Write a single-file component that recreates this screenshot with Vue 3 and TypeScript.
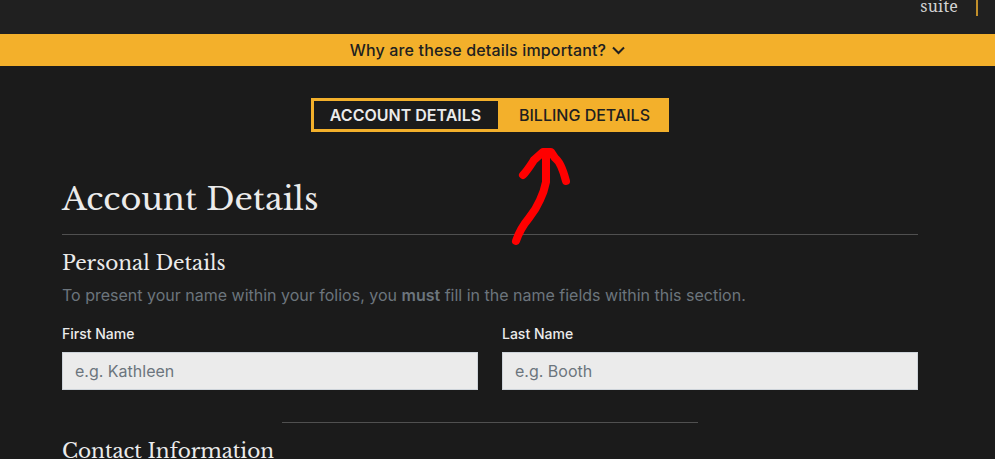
<script setup lang="ts">
import { ref } from 'vue'

interface Field {
  id: string
  label: string
  placeholder: string
}

const tabs: string[] = ['Account Details', 'Billing Details']
const activeTab = ref<string>('Account Details')

const nameFields: Field[] = [
  { id: 'first-name', label: 'First Name', placeholder: 'e.g. Kathleen' },
  { id: 'last-name', label: 'Last Name', placeholder: 'e.g. Booth' },
]
</script>

<template>
  <div class="page">
    <header class="topbar">
      <span class="brand">suite</span>
      <span class="brand-rule"></span>
    </header>

    <button class="banner" type="button">
      <span class="banner-text">Why are these details important?</span>
      <svg class="chevron" viewBox="0 0 13 9" width="13" height="9" fill="none">
        <path d="M1 1.5 6.5 7 12 1.5" stroke="currentColor" stroke-width="2" />
      </svg>
    </button>

    <main class="content">
      <nav class="tabs">
        <button
          v-for="tab in tabs"
          :key="tab"
          type="button"
          class="tab"
          :class="{ active: tab === activeTab }"
          @click="activeTab = tab"
        >
          <span>{{ tab }}</span>
        </button>
      </nav>

      <h1 class="title">Account Details</h1>

      <section class="section">
        <h2 class="subtitle">Personal Details</h2>
        <p class="hint">
          To present your name within your folios, you <strong>must</strong> fill in the name fields within this section.
        </p>
        <div class="fields">
          <div v-for="field in nameFields" :key="field.id" class="field">
            <label :for="field.id">{{ field.label }}</label>
            <input :id="field.id" type="text" :placeholder="field.placeholder" />
          </div>
        </div>
      </section>

      <hr class="divider" />

      <h2 class="subtitle">Contact Information</h2>
    </main>

    <svg class="pointer" viewBox="0 0 80 110" width="80" height="110" fill="none">
      <path
        d="M46 12V42C45 47 43 54 40 60C37 67 33 73 29 78C24 84 19 92 16 101M23 35C27 31 32 23 34 20L43 12H51L55 18Q61 22 66 41"
        stroke="#ff0000"
        stroke-width="8"
        stroke-linecap="round"
        stroke-linejoin="round"
      />
    </svg>
  </div>
</template>

<style>
body {
  background: #1b1b1b;
  overflow: hidden;
}
</style>

<style scoped>
.page {
  position: relative;
  height: 459px;
  overflow: hidden;
  background: #1b1b1b;
  color: #ebebeb;
  font-family: Inter, "Liberation Sans", sans-serif;
  font-size: 16px;
}

.topbar {
  display: flex;
  justify-content: flex-end;
  height: 34px;
  padding-right: 17px;
  box-sizing: border-box;
  background: #202020;
}

.brand {
  margin-top: -4px;
  margin-right: 18px;
  color: #d2d2d2;
  font-family: "Noto Serif", "DejaVu Serif Condensed", "DejaVu Serif", serif;
  font-size: 16px;
  letter-spacing: 0.2px;
  line-height: 20px;
}

.brand-rule {
  width: 2px;
  height: 16px;
  background: #c18f2a;
}

.banner {
  display: flex;
  align-items: center;
  justify-content: center;
  gap: 6px;
  width: 100%;
  height: 32px;
  padding: 0 20px 0 0;
  border: 0;
  background: #f3b02b;
  color: #202020;
  font: 500 16px/24px Inter, "Liberation Sans", sans-serif;
  letter-spacing: 0.15px;
}

.content {
  width: 856px;
  margin-left: 62px;
  padding-top: 32px;
}

.tabs {
  display: flex;
  width: 358px;
  height: 34px;
  margin: 0 auto;
}

.tab {
  flex: 0 0 168px;
  padding: 0 1px 0 0;
  border: 3px solid #f3b02b;
  background: #f3b02b;
  color: #202020;
  font: 500 16px/24px Inter, "Liberation Sans", sans-serif;
  text-transform: uppercase;
}

.tab.active {
  flex-basis: 190px;
  background: #1b1b1b;
  color: #ebebeb;
  font-weight: 600;
}

.title {
  height: 57px;
  margin: 32px 0 0;
  padding-top: 13px;
  border-bottom: 1px solid #505050;
  font: 400 32px/44px "Libre Baskerville", "Liberation Serif", serif;
}

.subtitle {
  height: 28px;
  margin: 14px 0 0;
  font: 400 20px/28px "Libre Baskerville", "Liberation Serif", serif;
}

.hint {
  margin: 6px 0 0;
  color: #6c757d;
  font-size: 16px;
  line-height: 24px;
  white-space: nowrap;
}

.hint strong {
  font-weight: 600;
}

.fields {
  display: grid;
  grid-template-columns: 1fr 1fr;
  gap: 24px;
  margin-top: 16px;
}

.field label {
  display: block;
  height: 21px;
  margin-bottom: 8px;
  font-size: 14px;
  font-weight: 500;
  line-height: 21px;
}

.field input {
  display: block;
  width: 100%;
  height: 38px;
  padding: 0 12px;
  box-sizing: border-box;
  border: 1px solid #ced4da;
  border-radius: 0;
  background: #ebebeb;
  font: 400 16px/24px Inter, "Liberation Sans", sans-serif;
}

.field input::placeholder {
  color: #6c757d;
  opacity: 1;
}

.divider {
  width: 416px;
  height: 1px;
  margin: 32px auto 0;
  border: 0;
  background: #505050;
}

.pointer {
  position: absolute;
  top: 140px;
  left: 500px;
}
</style>
